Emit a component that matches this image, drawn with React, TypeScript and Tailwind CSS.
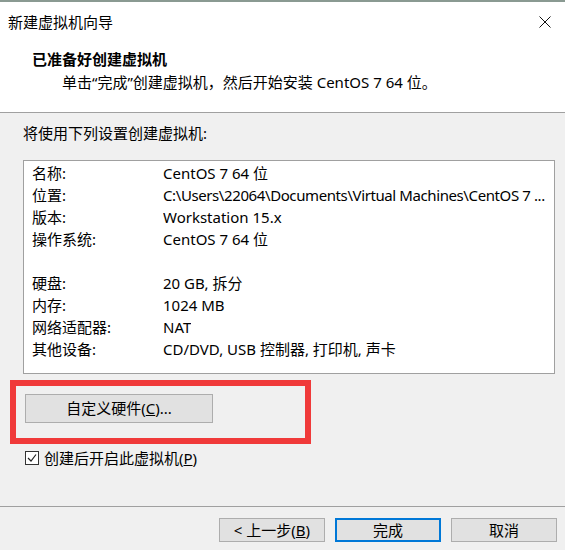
import React from 'react';

const font = { fontFamily: '"Noto Sans", "Noto Sans CJK SC", sans-serif' };

const rows: [string, string][] = [
  ['名称:', 'CentOS 7 64 位'],
  ['位置:', 'C:\\Users\\22064\\Documents\\Virtual Machines\\CentOS 7 ...'],
  ['版本:', 'Workstation 15.x'],
  ['操作系统:', 'CentOS 7 64 位'],
  ['', ''],
  ['硬盘:', '20 GB, 拆分'],
  ['内存:', '1024 MB'],
  ['网络适配器:', 'NAT'],
  ['其他设备:', 'CD/DVD, USB 控制器, 打印机, 声卡'],
];

function WinButton({ children, active = false, className = '' }: { children: React.ReactNode; active?: boolean; className?: string }) {
  return (
    <button
      className={
        'flex items-center justify-center bg-[#e1e1e1] text-[15px] text-black ' +
        (active ? 'border-2 border-[#0078d7] ' : 'border border-[#adadad] ') +
        className
      }
    >
      {children}
    </button>
  );
}

export default function App() {
  return (
    <div className="w-[565px] h-[550px] bg-[#f0f0f0] flex flex-col text-black overflow-hidden" style={font}>
      <div className="h-[2px] bg-[#8a9a92]" />

      {/* title bar */}
      <div className="h-[40px] bg-white flex items-center justify-between pl-[8px] pr-[14px]">
        <span className="text-[15px] leading-none">新建虚拟机向导</span>
        <svg width="12" height="12" viewBox="0 0 12 12">
          <path d="M0.5 0.5 L11.5 11.5 M11.5 0.5 L0.5 11.5" stroke="#111" strokeWidth="1" />
        </svg>
      </div>

      {/* header */}
      <div className="h-[71px] bg-white border-b border-[#a0a0a0] flex flex-col">
        <div className="pl-[32px] pt-[6px] text-[15px] font-bold leading-[22px]">已准备好创建虚拟机</div>
        <div className="pl-[62px] text-[15px] leading-[24px]">单击“完成”创建虚拟机，然后开始安装 CentOS 7 64 位。</div>
      </div>

      {/* body */}
      <div className="px-[23px] pt-[9px]">
        <div className="text-[15px] leading-[22px]">将使用下列设置创建虚拟机:</div>
        <div className="mt-[16px] w-[532px] h-[214px] bg-white border border-[#a0a0a0] pt-[1px] pl-[8px]">
          {rows.map(([k, v], i) => (
            <div key={i} className="flex h-[22px] items-center text-[15px] whitespace-nowrap">
              <span className="w-[131px] shrink-0">{k}</span>
              <span className={i === 1 ? 'overflow-hidden tracking-[-0.4px]' : 'overflow-hidden'}>{v}</span>
            </div>
          ))}
        </div>
      </div>

      {/* highlighted custom hardware */}
      <div className="ml-[10px] mt-[6px] w-[301px] h-[64px] border-[6px] border-[#f03a3a] pl-[9px] pt-[8px]">
        <WinButton className="w-[188px] h-[29px]">
          自定义硬件(<span className="underline">C</span>)...
        </WinButton>
      </div>

      <label className="ml-[25px] mt-[3px] flex items-center gap-[5px] text-[15px] leading-[22px]">
        <span className="w-[14px] h-[14px] border border-[#333] bg-white flex items-center justify-center">
          <svg width="10" height="10" viewBox="0 0 10 10">
            <path d="M1 5 L4 8 L9 1.5" fill="none" stroke="#222" strokeWidth="1.2" />
          </svg>
        </span>
        <span>
          创建后开启此虚拟机(<span className="underline">P</span>)
        </span>
      </label>

      <div className="flex-1" />

      {/* footer */}
      <div className="border-t border-[#a0a0a0] h-[44px] flex items-start justify-end gap-[10px] pt-[11px] pr-[8px]">
        <WinButton className="w-[106px] h-[24px]">
          &lt; 上一步(<span className="underline">B</span>)
        </WinButton>
        <WinButton active className="w-[106px] h-[24px]">完成</WinButton>
        <WinButton className="w-[106px] h-[24px]">取消</WinButton>
      </div>
    </div>
  );
}
